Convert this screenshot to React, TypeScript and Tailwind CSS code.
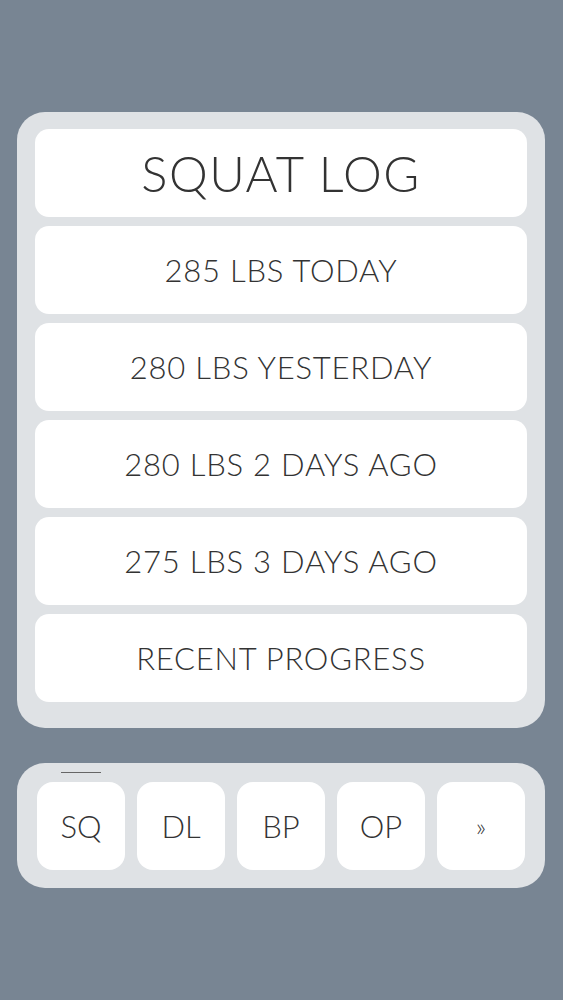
import React from "react";

const entries = ["285 LBS TODAY", "280 LBS YESTERDAY", "280 LBS 2 DAYS AGO", "275 LBS 3 DAYS AGO", "RECENT PROGRESS"];
const tabs = ["SQ", "DL", "BP", "OP", "»"];

export default function App() {
  return (
    <div
      className="min-h-screen w-full bg-[#788593] pt-[112px] pl-[17px] pr-[18px] text-[#333]"
      style={{ fontFamily: 'Lato, "Open Sans", sans-serif' }}
    >
      {/* log panel */}
      <div className="bg-[#dfe2e5] rounded-[28px] pt-[17px] pb-[26px] px-[18px] flex flex-col gap-[9px]">
        <div className="bg-white rounded-[14px] h-[88px] flex items-center justify-center">
          <span className="text-[49px] font-light tracking-[0.03em] leading-none">SQUAT LOG</span>
        </div>
        {entries.map((e) => (
          <div key={e} className="bg-white rounded-[14px] h-[88px] flex items-center justify-center">
            <span className="text-[31px] font-light tracking-[0.025em] leading-none">{e}</span>
          </div>
        ))}
      </div>

      {/* exercise tabs */}
      <div className="mt-[35px] bg-[#dfe2e5] rounded-[28px] pt-[19px] pb-[18px] px-[20px] relative">
        <div className="absolute left-[44px] top-[9px] w-[40px] h-px bg-[#666]" />
        <div className="flex justify-between">
          {tabs.map((t) => (
            <div key={t} className="bg-white rounded-[16px] w-[88px] h-[88px] flex items-center justify-center">
              <span className={t === "»" ? "text-[26px] font-light" : "text-[31px] font-light leading-none"}>{t}</span>
            </div>
          ))}
        </div>
      </div>
    </div>
  );
}
